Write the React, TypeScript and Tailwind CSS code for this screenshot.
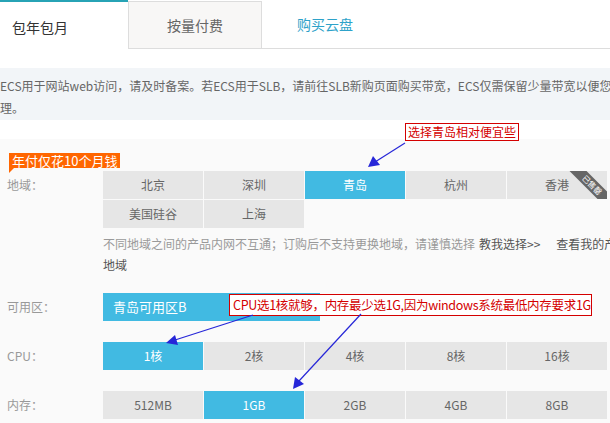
import React from 'react';

const font = { fontFamily: '"Noto Sans CJK SC", "Noto Sans", sans-serif' };

const regions = ['北京', '深圳', '青岛', '杭州', '香港', '美国硅谷', '上海'];
const cpus = ['1核', '2核', '4核', '8核', '16核'];
const mems = ['512MB', '1GB', '2GB', '4GB', '8GB'];

const Option: React.FC<{ label: string; active?: boolean; soldOut?: boolean }> = ({ label, active, soldOut }) => (
  <div
    className={
      'relative h-[28px] flex items-center justify-center overflow-hidden text-[12px] ' +
      (active ? 'bg-[#41bae2] text-white' : 'bg-[#e6e6e6] text-[#666]')
    }
  >
    {label}
    {soldOut && (
      <div className="absolute left-[57px] top-[8px] w-[56px] h-[12px] rotate-45 bg-[#666] text-white text-[8px] leading-[12px] text-center">
        已售罄
      </div>
    )}
  </div>
);

const Row: React.FC<{ label: string; className?: string; children: React.ReactNode }> = ({ label, className, children }) => (
  <div className={'flex ' + (className || '')}>
    <div className="w-[103px] shrink-0 pl-[7px] text-[12px] leading-[28px] text-[#999]">{label}</div>
    <div>{children}</div>
  </div>
);

export default function App() {
  return (
    <div className="relative w-[610px] h-[423px] overflow-hidden bg-white" style={font}>
      <div className="w-[640px]">
        {/* tabs */}
        <div className="flex h-[49px]">
          <div className="w-[128px] border-t-2 border-[#27a3b5] pl-3 pt-[3px] flex items-center text-[14px] text-[#333]">
            包年包月
          </div>
          <div className="w-[134px] h-[48px] mt-px bg-[#f8f7f6] border border-[#dddddd] flex items-center justify-center text-[14px] text-[#666]">
            按量付费
          </div>
          <div className="flex-1 border-b border-[#dddddd] pl-[35px] flex items-center text-[14px] text-[#2ea2c9]">
            购买云盘
          </div>
        </div>

        {/* notice */}
        <div className="mt-[19px] h-[52px] bg-[#f2f5f8] pt-[7px] text-[12px] leading-[22px] text-[#666] whitespace-nowrap">
          <div>ECS用于网站web访问，请及时备案。若ECS用于SLB，请前往SLB新购页面购买带宽，ECS仅需保留少量带宽以便您管</div>
          <div>理。</div>
        </div>

        {/* config */}
        <div className="mt-[19px] bg-[#fafafa] h-[300px] pt-[14px]">
          <div className="flex h-[18px] items-start">
            <div className="relative ml-[9px] h-[15px] px-[3px] bg-[#ff6600] text-white text-[13px] leading-[15px] whitespace-nowrap">
              年付仅花10个月钱
              <span className="absolute left-0 top-full w-0 h-0 border-t-[5px] border-t-[#ff6600] border-r-[5px] border-r-transparent" />
            </div>
          </div>

          <Row label="地域：">
            <div className="grid grid-cols-[repeat(5,100px)] gap-px">
              {regions.map((r) => (
                <Option key={r} label={r} active={r === '青岛'} soldOut={r === '香港'} />
              ))}
            </div>
            <div className="mt-[5px] text-[12px] leading-[21px] text-[#999] whitespace-nowrap">
              不同地域之间的产品内网不互通；订购后不支持更换地域，请谨慎选择
              <span className="ml-1 text-[#555]">教我选择&gt;&gt;</span>
              <span className="ml-[16px] text-[#555]">查看我的产品</span>
              <br />
              <span className="text-[#555]">地域</span>
            </div>
          </Row>

          <Row label="可用区：" className="mt-[18px]">
            <div className="w-[217px] h-[28px] bg-[#41bae2] text-white text-[13px] leading-[28px] pl-[10px]">
              青岛可用区B
            </div>
          </Row>

          <Row label="CPU：" className="mt-[21px]">
            <div className="grid grid-cols-[repeat(5,100px)] gap-px">
              {cpus.map((c, i) => (
                <Option key={c} label={c} active={i === 0} />
              ))}
            </div>
          </Row>

          <Row label="内存：" className="mt-[21px]">
            <div className="grid grid-cols-[repeat(5,100px)] gap-px">
              {mems.map((m, i) => (
                <Option key={m} label={m} active={i === 1} />
              ))}
            </div>
          </Row>
        </div>
      </div>

      {/* annotations */}
      <div className="absolute left-[405px] top-[123px] h-[18px] px-[2px] border border-[#d40000] bg-white text-[#d40000] text-[12px] leading-[16px] whitespace-nowrap">
        选择青岛相对便宜些
      </div>
      <div className="absolute left-[229px] top-[294px] w-[363px] h-[22px] border border-[#d40000] bg-white text-[#d40000] text-[12.5px] leading-[20px] pl-[3px] whitespace-nowrap tracking-[-0.3px]">
        CPU选1核就够，内存最少选1G,因为windows系统最低内存要求1G
      </div>
      <svg className="absolute left-0 top-0" width="610" height="423" viewBox="0 0 610 423">
        <g stroke="#2626d8" strokeWidth="1.2" fill="#2626d8">
          <line x1="405" y1="143" x2="375" y2="162" />
          <polygon points="368,167 373,156 380,165" stroke="none" />
          <line x1="253" y1="315" x2="175" y2="340" />
          <polygon points="166,343 175,335 178,345" stroke="none" />
          <line x1="361" y1="314" x2="299" y2="381" />
          <polygon points="293,389 295,377 304,384" stroke="none" />
        </g>
      </svg>
    </div>
  );
}
